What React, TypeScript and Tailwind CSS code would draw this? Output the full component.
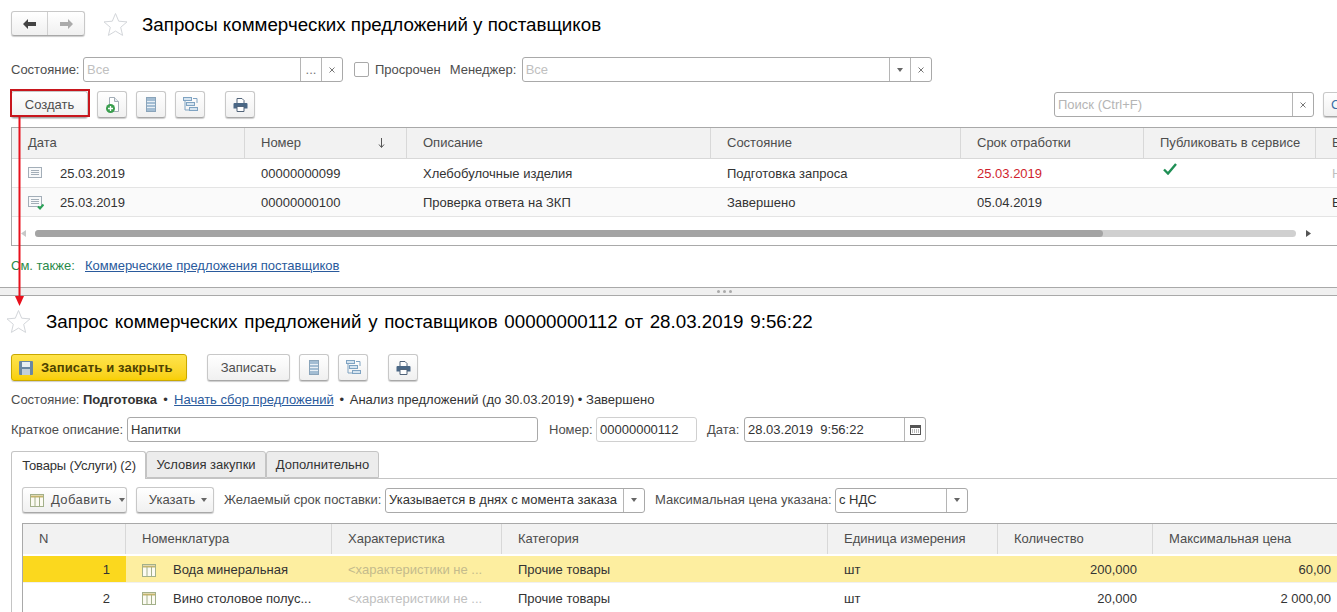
import type { ReactNode } from "react";

const btn =
  "flex shrink-0 items-center justify-center rounded-[3px] border border-[#c8c8c8] border-b-[#a8a8a8] bg-gradient-to-b from-white to-[#f0f0f0] shadow-[0_1px_1px_rgba(0,0,0,0.2)]";
const field = "flex h-[25px] shrink-0 items-center rounded-[3px] border border-[#a9a9a9] bg-white";
const sideBtn = "flex h-full items-center justify-center border-l border-[#b5b5b5] text-[#555]";

function Star() {
  return (
    <svg width="25" height="25" viewBox="0 0 25 25" fill="none" stroke="#d3d6da" strokeWidth="1">
      <path d="M12.5 1.5l3.2 7.7 8.3.7-6.3 5.4 1.9 8.1-7.1-4.3-7.1 4.3 1.9-8.1L1 9.9l8.3-.7z" />
    </svg>
  );
}

function Dropdown() {
  return (
    <svg width="6" height="4" viewBox="0 0 6 4">
      <path d="M0 0h6L3 4z" fill="#666" />
    </svg>
  );
}

function Cross() {
  return (
    <svg width="6" height="6" viewBox="0 0 6 6" stroke="#777" strokeWidth="1">
      <path d="M.5.5l5 5M5.500.5l-5 5" />
    </svg>
  );
}

function StackIcon() {
  return (
    <svg width="10" height="15" viewBox="0 0 10 15">
      <rect x="0.5" y="0.5" width="9" height="14" fill="#a3bdd3" stroke="#8aa4ba" />
      <path d="M1 4.500h8M1 7.500h8M1 10.500h8" stroke="#e8eff5" />
    </svg>
  );
}

function TreeIcon() {
  return (
    <svg width="15" height="15" viewBox="0 0 15 15" fill="#d5e4f0" stroke="#7fa3c2">
      <rect x="0.5" y="0.5" width="8" height="3" />
      <rect x="3.500" y="5.500" width="8" height="3" />
      <rect x="6.500" y="10.500" width="8" height="3" />
      <path d="M2 4v9h4M10 1.500h4V6" fill="none" />
    </svg>
  );
}

function PrintIcon() {
  return (
    <svg width="15" height="14" viewBox="0 0 15 14">
      <path d="M4 .5h5l2 2V6H4z" fill="#fff" stroke="#52647a" />
      <path d="M1.500 5h12a1 1 0 0 1 1 1v4.500h-14V6a1 1 0 0 1 1-1z" fill="#4a6785" />
      <path d="M4 8.500h7v5H4z" fill="#fff" stroke="#52647a" />
    </svg>
  );
}

function NewDocIcon() {
  return (
    <svg width="13" height="16" viewBox="0 0 13 16">
      <path d="M3.500.5h5l4 4v10h-9z" fill="#fff" stroke="#a3adb6" />
      <path d="M8.500.5v4h4" fill="#e6ebef" stroke="#a3adb6" />
      <circle cx="4.500" cy="11.500" r="4.500" fill="#3a9e4e" />
      <path d="M4.500 9v5M2 11.500h5" stroke="#fff" strokeWidth="1.300" />
    </svg>
  );
}

function SaveIcon() {
  return (
    <svg width="14" height="14" viewBox="0 0 14 14">
      <rect width="14" height="14" rx="1" fill="#6a87a3" />
      <rect x="3" y="1" width="8" height="5" fill="#e8eef3" />
      <rect x="3" y="8" width="8" height="6" fill="#c3cfda" />
    </svg>
  );
}

function ListIcon({ done }: { done?: boolean }) {
  return (
    <svg width="16" height="14" viewBox="0 0 16 14">
      <rect x="0.5" y="0.5" width="13" height="10" fill="#f8f9fa" stroke="#a3aeb8" />
      <path d="M3 3.500h8M3 5.500h8M3 7.500h8" stroke="#a3aeb8" />
      {done && <path d="M10 10.500l2 2 3.500-4" fill="none" stroke="#2aa257" strokeWidth="2" />}
    </svg>
  );
}

function GridIcon() {
  return (
    <svg width="14" height="13" viewBox="0 0 14 13" fill="none">
      <rect x="0.5" y="0.5" width="13" height="12" fill="#fcfbf3" stroke="#a3b08a" />
      <path d="M1 2.500h12" stroke="#c4b46c" strokeWidth="2" />
      <path d="M5 3v9M9.500 3v9" stroke="#a3b08a" />
    </svg>
  );
}

function IconBtn({ children, className = "" }: { children: ReactNode; className?: string }) {
  return <div className={`${btn} h-[27px] w-[30px] ${className}`}>{children}</div>;
}

function HeaderCell({ children, className = "" }: { children: ReactNode; className?: string }) {
  return (
    <div className={`flex h-full items-center whitespace-nowrap border-r border-[#d8d8d8] text-[#4d4d4d] ${className}`}>
      {children}
    </div>
  );
}

function Cell({ children, className = "" }: { children?: ReactNode; className?: string }) {
  return <div className={`flex h-full items-center overflow-hidden whitespace-nowrap pt-[2px] ${className}`}>{children}</div>;
}

const topCols = "grid grid-cols-[233px_162px_304px_250px_183px_172px_40px]";
const lowCols = "grid grid-cols-[103px_206px_170px_326px_170px_155px_184px]";

function TopList() {
  return (
    <div className="h-[287px] shrink-0 pl-[11px] pt-[11px]">
      <div className="flex h-[25px] items-center">
        <div className={`${btn} h-[25px] w-[74px]`}>
          <div className="flex h-full w-[37px] items-center justify-center border-r border-[#d0d0d0]">
            <svg width="13" height="10" viewBox="0 0 13 10" fill="#444">
              <path d="M0 5l5-5v3h8v4H5v3z" />
            </svg>
          </div>
          <div className="flex h-full w-[37px] items-center justify-center">
            <svg width="13" height="10" viewBox="0 0 13 10" fill="#aaa">
              <path d="M13 5L8 0v3H0v4h8v3z" />
            </svg>
          </div>
        </div>
        <div className="ml-[18px] pt-[2px]">
          <Star />
        </div>
        <h1 className="ml-[14px] pt-[4px] text-[18.75px] text-black">Запросы коммерческих предложений у поставщиков</h1>
      </div>

      <div className="mt-[21px] flex h-[25px] items-center">
        <span className="w-[72px] text-[#4d4d4d]">Состояние:</span>
        <div className={`${field} w-[260px]`}>
          <span className="flex-1 pl-[3px] text-[#c0c0c0]">Все</span>
          <div className={`${sideBtn} w-[21px] text-[#777]`}>...</div>
          <div className={`${sideBtn} w-[21px]`}>
            <Cross />
          </div>
        </div>
        <div className="ml-[11px] h-[15px] w-[15px] rounded-[2px] border border-[#a9a9a9] bg-white" />
        <span className="ml-[6px] text-[#4d4d4d]">Просрочен</span>
        <span className="ml-[9px] w-[72px] text-[#4d4d4d]">Менеджер:</span>
        <div className={`${field} w-[410px]`}>
          <span className="flex-1 pl-[3px] text-[#c0c0c0]">Все</span>
          <div className={`${sideBtn} w-[21px]`}>
            <Dropdown />
          </div>
          <div className={`${sideBtn} w-[21px]`}>
            <Cross />
          </div>
        </div>
      </div>

      <div className="mt-[9px] flex h-[27px] items-center">
        <div className={`${btn} h-[27px] w-[77px] text-[#4d4d4d]`}>Создать</div>
        <IconBtn className="ml-[9px]">
          <NewDocIcon />
        </IconBtn>
        <IconBtn className="ml-[9px]">
          <StackIcon />
        </IconBtn>
        <IconBtn className="ml-[9px]">
          <TreeIcon />
        </IconBtn>
        <IconBtn className="ml-[20px]">
          <PrintIcon />
        </IconBtn>
        <div className={`${field} ml-[799px] w-[260px]`}>
          <span className="flex-1 pl-[3px] text-[#b5b5b5]">Поиск (Ctrl+F)</span>
          <div className={`${sideBtn} w-[21px]`}>
            <Cross />
          </div>
        </div>
        <div className={`${btn} ml-[9px] h-[25px] w-[30px] justify-start pl-[7px] text-[#3b6ea5]`}>С</div>
      </div>

      <div className="mt-[9px] h-[119px] overflow-hidden border-b border-l border-t border-[#a9a9a9]">
        <div className={`${topCols} h-[31px] border-b border-[#d8d8d8] bg-[#f2f2f2]`}>
          <HeaderCell className="pl-[16px]">Дата</HeaderCell>
          <HeaderCell className="justify-between pl-[16px] pr-[21px]">
            Номер
            <svg width="7" height="10" viewBox="0 0 7 10" fill="none" stroke="#555">
              <path d="M3.500 0v9M1 6.500l2.500 3 2.500-3" />
            </svg>
          </HeaderCell>
          <HeaderCell className="pl-[16px]">Описание</HeaderCell>
          <HeaderCell className="pl-[16px]">Состояние</HeaderCell>
          <HeaderCell className="pl-[16px]">Срок отработки</HeaderCell>
          <HeaderCell className="pl-[16px]">Публиковать в сервисе</HeaderCell>
          <HeaderCell className="border-r-0 pl-[16px]">В</HeaderCell>
        </div>
        <div className={`${topCols} h-[29px] border-b border-[#e4e4e4]`}>
          <Cell className="pl-[16px]">
            <ListIcon />
            <span className="ml-[16px]">25.03.2019</span>
          </Cell>
          <Cell className="pl-[16px]">00000000099</Cell>
          <Cell className="pl-[16px]">Хлебобулочные изделия</Cell>
          <Cell className="pl-[16px]">Подготовка запроса</Cell>
          <Cell className="pl-[16px] text-[#d01f2e]">25.03.2019</Cell>
          <Cell className="items-start pl-[19px] pt-[4px]">
            <svg width="14" height="12" viewBox="0 0 14 12" fill="none" stroke="#1f8f55" strokeWidth="2.400">
              <path d="M1 6.500l4 4 8-9.500" />
            </svg>
          </Cell>
          <Cell className="pl-[16px] text-[#c0c0c0]">Н</Cell>
        </div>
        <div className={`${topCols} h-[29px] border-b border-[#e4e4e4] bg-[#fafafa]`}>
          <Cell className="pl-[16px]">
            <ListIcon done />
            <span className="ml-[16px]">25.03.2019</span>
          </Cell>
          <Cell className="pl-[16px]">00000000100</Cell>
          <Cell className="pl-[16px]">Проверка ответа на ЗКП</Cell>
          <Cell className="pl-[16px]">Завершено</Cell>
          <Cell className="pl-[16px]">05.04.2019</Cell>
          <Cell />
          <Cell className="pl-[16px]">Е</Cell>
        </div>
        <div className="flex h-[28px] items-center pl-[9px] pt-[5px]">
          <svg className="shrink-0" width="5" height="7" viewBox="0 0 5 7">
            <path d="M5 0v7L0 3.500z" fill="#c8c8c8" />
          </svg>
          <div className="ml-[9px] h-[7px] w-[1261px] shrink-0 rounded-full bg-[#d0d0d0]">
            <div className="h-full w-[1068px] rounded-full bg-[#a4a4a4]" />
          </div>
          <svg className="ml-[10px] shrink-0" width="5" height="7" viewBox="0 0 5 7">
            <path d="M0 0v7l5-3.500z" fill="#555" />
          </svg>
        </div>
      </div>

      <div className="mt-[12px] flex h-[16px] items-center">
        <span className="w-[74px] text-[#2a8a4a]">См. также:</span>
        <a className="text-[#2a5a9c] underline">Коммерческие предложения поставщиков</a>
      </div>
    </div>
  );
}

function Splitter() {
  return (
    <div className="flex h-[9px] shrink-0 items-center justify-center gap-[3px] border-y border-[#a9a9a9] bg-[#f0f0f0] pl-[111px]">
      <span className="h-[3px] w-[3px] rounded-full bg-[#aaa]" />
      <span className="h-[3px] w-[3px] rounded-full bg-[#aaa]" />
      <span className="h-[3px] w-[3px] rounded-full bg-[#aaa]" />
    </div>
  );
}

function RequestForm() {
  return (
    <div className="min-h-0 flex-1 overflow-hidden pl-[11px]">
      <div className="ml-[-5px] mt-[13px] flex h-[25px] items-center">
        <Star />
        <h2 className="ml-[15px] whitespace-nowrap pt-[2px] text-[18.75px] text-black [word-spacing:1.5px]">
          Запрос коммерческих предложений у поставщиков 00000000112 от 28.03.2019 9:56:22
        </h2>
      </div>

      <div className="mt-[20px] flex h-[27px] items-center">
        <div className="flex h-[27px] w-[176px] shrink-0 items-center gap-[8px] rounded-[3px] border border-[#c9a800] bg-gradient-to-b from-[#ffe44a] to-[#f8cf00] pl-[7px] font-bold tracking-[0.15px] text-[#4d4200] shadow-[0_1px_1px_rgba(0,0,0,0.2)]">
          <SaveIcon />
          Записать и закрыть
        </div>
        <div className={`${btn} ml-[20px] h-[27px] w-[83px] text-[#4d4d4d]`}>Записать</div>
        <IconBtn className="ml-[9px]">
          <StackIcon />
        </IconBtn>
        <IconBtn className="ml-[9px]">
          <TreeIcon />
        </IconBtn>
        <IconBtn className="ml-[20px]">
          <PrintIcon />
        </IconBtn>
      </div>

      <div className="mt-[9px] flex h-[18px] items-center whitespace-pre pt-[1px] text-[#333]">
        <span className="w-[72px] text-[#4d4d4d]">Состояние:</span>
        <span className="font-bold">Подготовка</span>
        <span className="w-[17px] text-center">•</span>
        <a className="text-[#2a5a9c] underline">Начать сбор предложений</a>
        <span className="w-[16px] text-center">•</span>
        <span>Анализ предложений (до 30.03.2019) • Завершено</span>
      </div>

      <div className="mt-[9px] flex h-[25px] items-center">
        <span className="w-[116px] whitespace-nowrap text-[#4d4d4d]">Краткое описание:</span>
        <div className={`${field} w-[411px] pl-[3px]`}>Напитки</div>
        <span className="ml-[11px] w-[47px] text-[#4d4d4d]">Номер:</span>
        <div className={`${field} w-[101px] border-[#d0d0d0] pl-[3px]`}>00000000112</div>
        <span className="ml-[10px] w-[37px] text-[#4d4d4d]">Дата:</span>
        <div className={`${field} w-[182px] pl-[3px]`}>
          <span className="flex-1 whitespace-pre">28.03.2019  9:56:22</span>
          <div className={`${sideBtn} w-[21px]`}>
            <svg width="11" height="11" viewBox="0 0 11 11">
              <rect x="0.5" y="1.500" width="10" height="9" fill="#fff" stroke="#555" />
              <path d="M1 3h9" stroke="#555" strokeWidth="2" />
              <path d="M2 6h7M2 8h7" stroke="#777" strokeDasharray="1 1" />
            </svg>
          </div>
        </div>
      </div>

      <div className="mt-[9px] flex h-[27px] items-end">
        <div className="z-10 mb-[-1px] flex h-[28px] w-[135px] items-center justify-center rounded-t-[3px] border border-b-0 border-[#c4c4c4] bg-white pl-[1px] tracking-[-0.15px]">
          Товары (Услуги) (2)
        </div>
        <div className="flex h-[27px] w-[120px] items-center justify-center rounded-t-[3px] border border-[#c4c4c4] bg-[#ececec]">
          Условия закупки
        </div>
        <div className="flex h-[27px] w-[113px] items-center justify-center rounded-t-[3px] border border-[#c4c4c4] bg-[#ececec]">
          Дополнительно
        </div>
      </div>

      <div className="border-l border-t border-[#c4c4c4] pl-[10px] pt-[8px]">
        <div className="flex h-[26px] items-center">
          <div className={`${btn} h-[26px] w-[105px] justify-start gap-[7px] pl-[7px] tracking-[0.4px] text-[#4d4d4d]`}>
            <GridIcon />
            Добавить
            <Dropdown />
          </div>
          <div className={`${btn} ml-[9px] h-[26px] w-[78px] gap-[6px] pl-[6px] text-[#4d4d4d]`}>
            Указать
            <Dropdown />
          </div>
          <span className="ml-[10px] w-[161px] whitespace-nowrap text-[#4d4d4d]">Желаемый срок поставки:</span>
          <div className={`${field} w-[260px] pl-[3px]`}>
            <span className="flex-1 whitespace-nowrap">Указывается в днях с момента заказа</span>
            <div className={`${sideBtn} w-[21px]`}>
              <Dropdown />
            </div>
          </div>
          <span className="ml-[10px] w-[180px] whitespace-nowrap text-[#4d4d4d]">Максимальная цена указана:</span>
          <div className={`${field} w-[133px] pl-[3px]`}>
            <span className="flex-1">с НДС</span>
            <div className={`${sideBtn} w-[21px]`}>
              <Dropdown />
            </div>
          </div>
        </div>

        <div className="mt-[10px] border-l border-t border-[#a9a9a9]">
          <div className={`${lowCols} h-[30px] bg-[#f2f2f2]`}>
            <HeaderCell className="pl-[16px]">N</HeaderCell>
            <HeaderCell className="pl-[16px]">Номенклатура</HeaderCell>
            <HeaderCell className="pl-[16px]">Характеристика</HeaderCell>
            <HeaderCell className="pl-[16px]">Категория</HeaderCell>
            <HeaderCell className="pl-[16px]">Единица измерения</HeaderCell>
            <HeaderCell className="pl-[16px]">Количество</HeaderCell>
            <HeaderCell className="border-r-0 pl-[16px]">Максимальная цена</HeaderCell>
          </div>
          <div className={`${lowCols} mt-[2px] h-[27px] border-b border-[#f0f0f0] bg-[#fdeea0]`}>
            <Cell className="justify-end bg-[#fbd81e] pr-[16px]">1</Cell>
            <Cell className="pl-[16px]">
              <GridIcon />
              <span className="ml-[17px]">Вода минеральная</span>
            </Cell>
            <Cell className="pl-[16px] text-[#c4bb8c]">&lt;характеристики не ...</Cell>
            <Cell className="pl-[16px]">Прочие товары</Cell>
            <Cell className="pl-[16px]">шт</Cell>
            <Cell className="justify-end pr-[16px]">200,000</Cell>
            <Cell className="justify-end pr-[6px]">60,00</Cell>
          </div>
          <div className={`${lowCols} h-[29px]`}>
            <Cell className="justify-end pr-[16px]">2</Cell>
            <Cell className="pl-[16px]">
              <GridIcon />
              <span className="ml-[17px]">Вино столовое полус...</span>
            </Cell>
            <Cell className="pl-[16px] text-[#c0c0c0]">&lt;характеристики не ...</Cell>
            <Cell className="pl-[16px]">Прочие товары</Cell>
            <Cell className="pl-[16px]">шт</Cell>
            <Cell className="justify-end pr-[16px]">20,000</Cell>
            <Cell className="justify-end pr-[6px]">2 000,00</Cell>
          </div>
        </div>
      </div>
    </div>
  );
}

export default function App() {
  return (
    <div className="relative flex h-[612px] w-[1337px] flex-col overflow-hidden bg-white font-['Liberation_Sans',Arial,sans-serif] text-[13px] text-[#333]">
      <TopList />
      <Splitter />
      <RequestForm />

      {/* annotation drawn over the screenshot */}
      <div className="absolute left-[10px] top-[89px] h-[28px] w-[80px] border-2 border-[#c8161d]" />
      <svg className="absolute left-[14px] top-[117px]" width="11" height="190" viewBox="0 0 11 190">
        <path d="M5.500 0V180" stroke="#e8101c" strokeWidth="2" />
        <path d="M1 179h9l-4.500 10z" fill="#e8101c" />
      </svg>
    </div>
  );
}
